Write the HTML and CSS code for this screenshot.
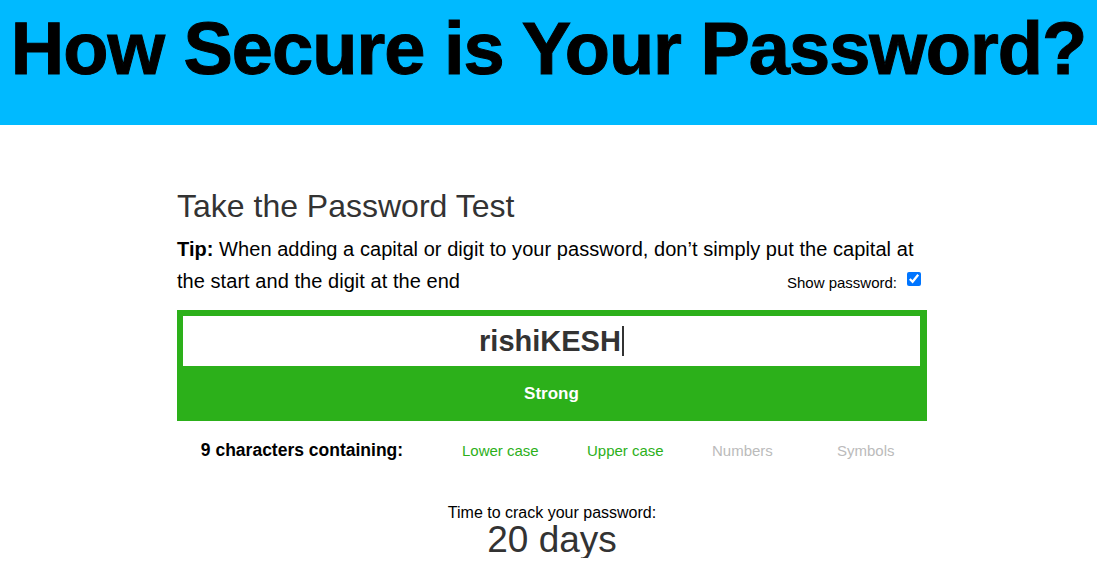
FILE: index.html
```html
<!DOCTYPE html>
<html lang="en">
<head>
<meta charset="utf-8">
<title>How Secure is Your Password?</title>
<link rel="stylesheet" href="styles.css">
</head>
<body>
<header class="banner">
  <h1 class="banner-title">How Secure is Your Password?</h1>
</header>
<main class="test">
  <h2 class="test-title">Take the Password Test</h2>
  <p class="tip"><b>Tip:</b> When adding a capital or digit to your password, don’t simply put the capital at</p>
  <div class="tip-row">
    <span class="tip">the start and the digit at the end</span>
    <label class="show">Show password:<input class="show-box" type="checkbox" checked></label>
  </div>
  <div class="meter">
    <div class="field"><span class="field-text">rishiKESH</span><span class="caret"></span></div>
    <div class="verdict">Strong</div>
  </div>
  <div class="criteria">
    <div class="count">9 characters containing:</div>
    <div class="crit on">Lower case</div>
    <div class="crit on">Upper case</div>
    <div class="crit">Numbers</div>
    <div class="crit">Symbols</div>
  </div>
  <div class="result">
    <div class="result-label">Time to crack your password:</div>
    <div class="result-value">20 days</div>
  </div>
</main>
</body>
</html>
```
FILE: styles.css
```css
* { box-sizing: border-box; }
body {
  margin: 0;
  font-family: "Liberation Sans", Arial, sans-serif;
  background: #fff;
  color: #000;
}
.banner {
  height: 125px;
  background: #00baff;
  padding-top: 12px;
}
.banner-title {
  margin: 0;
  font-size: 74px;
  line-height: 74px;
  font-weight: 700;
  text-align: center;
  letter-spacing: -1px;
  color: #000;
  -webkit-text-stroke: 1px #000;
}
.test {
  width: 750px;
  margin-left: 177px;
  padding-top: 61px;
}
.test-title {
  margin: 0;
  font-size: 32px;
  line-height: 40px;
  font-weight: 400;
  color: #333;
}
.tip {
  margin: 7px 0 0;
  font-size: 20px;
  line-height: 32px;
  color: #000;
  letter-spacing: 0.05px;
}
.tip-row {
  display: flex;
  justify-content: space-between;
  align-items: baseline;
}
.tip-row .tip { margin: 0; }
.show {
  font-size: 15px;
  color: #000;
}
.show-box {
  width: 14px;
  height: 14px;
  margin: 0 6px 0 10px;
  vertical-align: 2px;
  accent-color: #0075ff;
}
.meter {
  margin-top: 13px;
  background: #2cb01a;
  padding: 6px 7px 0 6px;
}
.field {
  height: 50px;
  background: #fff;
  display: flex;
  justify-content: center;
  align-items: center;
  font-size: 29px;
  font-weight: 700;
  color: #333;
}
.caret {
  width: 2px;
  height: 30px;
  background: #333;
  margin-left: 1px;
}
.verdict {
  height: 55px;
  display: flex;
  justify-content: center;
  align-items: center;
  color: #fff;
  font-weight: 700;
  font-size: 17px;
}
.criteria {
  margin-top: 17px;
  display: grid;
  grid-template-columns: 250px repeat(4, 125px);
  align-items: baseline;
  line-height: 24px;
}
.count {
  text-align: center;
  font-weight: 700;
  font-size: 17.5px;
  color: #000;
}
.crit {
  padding-left: 35px;
  font-size: 15px;
  color: #bbb;
}
.crit.on { color: #2cb01a; }
.result {
  margin-top: 40px;
  text-align: center;
}
.result-label {
  font-size: 16px;
  line-height: 19px;
  color: #000;
}
.result-value {
  font-size: 37px;
  line-height: 36px;
  color: #333;
}
```
